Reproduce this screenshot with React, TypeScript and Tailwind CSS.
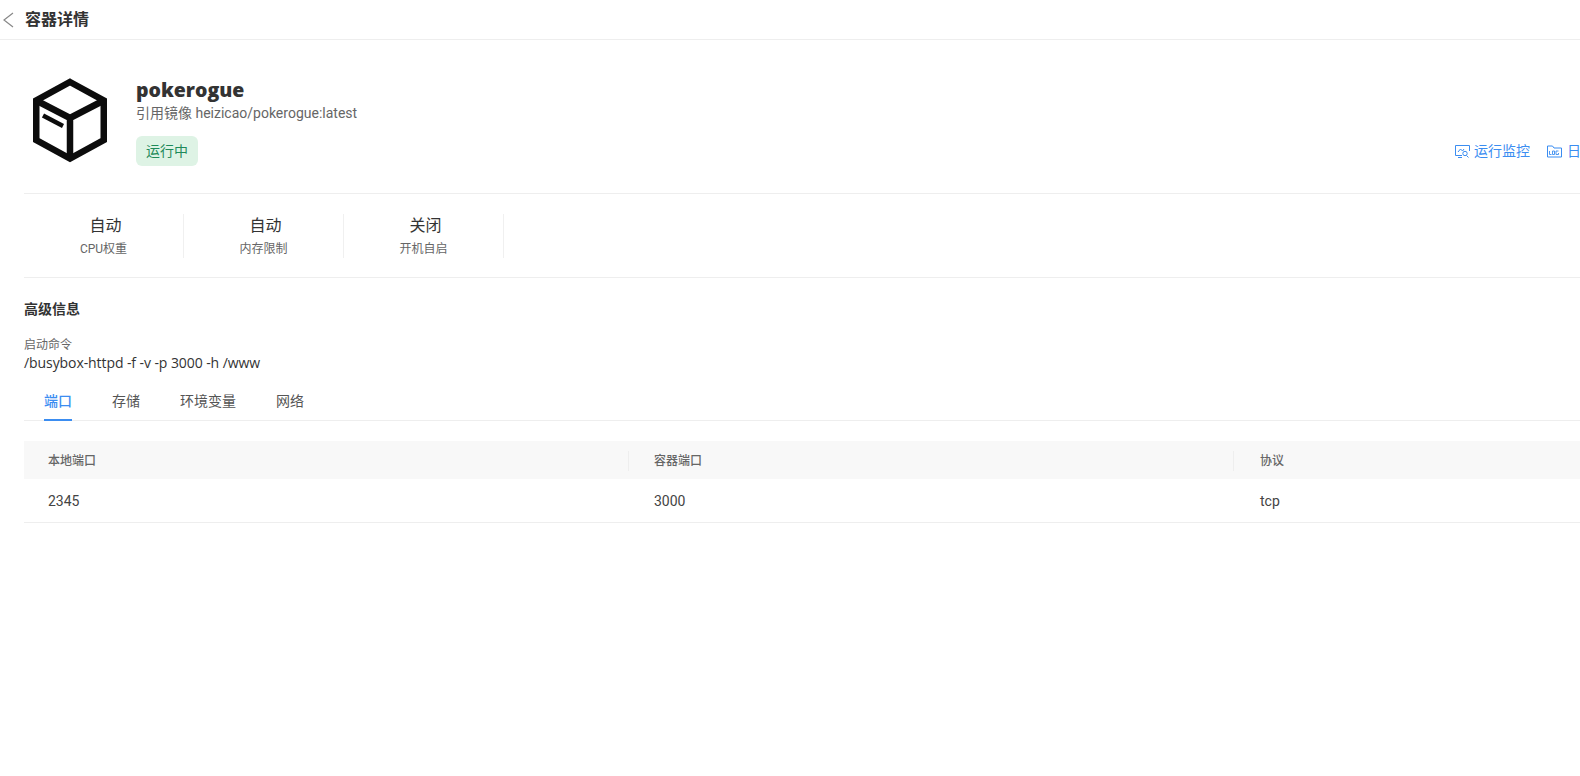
const font = "font-['Roboto','Noto_Sans_CJK_SC',sans-serif]";
const openSans = "font-['Open_Sans','Noto_Sans_CJK_SC',sans-serif]";

function BoxIcon() {
  return (
    <svg width="90" height="90" viewBox="24 75 90 90" fill="none" stroke="#0c0c0c" className="shrink-0">
      <path d="M70 82 L103.75 100.5 V140 L70 158.5 L36.25 140 V100.5 Z" strokeWidth="6.5" strokeLinejoin="miter" />
      <path d="M36.25 100.5 L70 118 L103.75 100.5 M70 118 V158.5" strokeWidth="6.5" />
      <path d="M43 115.5 L63 126" strokeWidth="4.5" />
    </svg>
  );
}

function MonitorIcon() {
  return (
    <svg width="15" height="15" viewBox="0 0 15 15" fill="none" stroke="#3b8df1" strokeWidth="1">
      <path d="M7 11.5 H0.5 V1.5 H14.5 V7" />
      <path d="M3 8 L5.5 5 L7.5 7 L9 5" />
      <circle cx="10" cy="9.5" r="2.2" />
      <path d="M11.5 11.5 L13.5 13.5 M3 13.5 H7" />
    </svg>
  );
}

function LogIcon() {
  return (
    <svg width="15" height="15" viewBox="0 0 15 15" fill="none" stroke="#3b8df1" strokeWidth="1">
      <path d="M0.5 13 V2 H5.5 L7 4 H14.5 V13 Z" />
      <path d="M2.5 7 V10.5 H4.5 M5.5 7 H7.5 V10.5 H5.5 Z M11.5 7 H9 V10.5 H11.5 V9" strokeWidth="0.9" />
    </svg>
  );
}

function Stat({ value, label }: { value: string; label: string }) {
  return (
    <div className="flex h-[44px] w-[160px] flex-col items-center border-r border-[#f0f0f0]">
      <div className="pl-[4px] text-[16px] leading-[24px] text-[#333]">{value}</div>
      <div className="mt-[3px] text-[12px] leading-[16px] text-[#666]">{label}</div>
    </div>
  );
}

export default function App() {
  const tabs = ["端口", "存储", "环境变量", "网络"];
  const cols = ["本地端口", "容器端口", "协议"];
  const vals = ["2345", "3000", "tcp"];
  const cellPad = ["pl-[24px]", "pl-[25px]", "pl-[26px]"];

  return (
    <div className={`h-screen w-screen overflow-hidden bg-white ${font}`}>
      <div className="w-[1863px]">
        <div className="flex h-[40px] items-center border-b border-[#eee]">
          <svg width="12" height="16" viewBox="0 0 12 16" fill="none" stroke="#888" strokeWidth="1.2" className="ml-[2px]">
            <path d="M11 1 L2 8 L11 15" />
          </svg>
          <span className="ml-[11px] text-[16px] font-bold text-[#333]">容器详情</span>
        </div>

        <div className="pl-[24px]">
          <div className="flex h-[154px] items-start border-b border-[#eee] pt-[35px]">
            <div className="flex w-[1571px] items-start">
              <BoxIcon />
              <div className="ml-[22px] flex-1 pt-[3px]">
                <div className={`text-[19.5px] leading-[24px] font-extrabold text-[#333] ${openSans}`}>pokerogue</div>
                <div className="text-[14px] leading-[22px] text-[#666]">引用镜像 heizicao/pokerogue:latest</div>
                <div className="mt-[12px] flex h-[30px] w-[62px] items-center justify-center rounded-[6px] bg-[#def3e5] text-[14px] text-[#1e8a5a]">运行中</div>
              </div>
              <div className="mt-[66px] flex h-[20px] items-center text-[14px] text-[#3b8df1]">
                <MonitorIcon />
                <span className="ml-[4px]">运行监控</span>
                <span className="ml-[17px]"><LogIcon /></span>
                <span className="ml-[5px]">日志</span>
              </div>
            </div>
          </div>

          <div className="flex h-[84px] items-center border-b border-[#eee]">
            <Stat value="自动" label="CPU权重" />
            <Stat value="自动" label="内存限制" />
            <Stat value="关闭" label="开机自启" />
          </div>

          <div className="mt-[21px] text-[14px] leading-[20px] font-bold text-[#333]">高级信息</div>
          <div className="mt-[18px] text-[12px] leading-[16px] text-[#666]">启动命令</div>
          <div className={`text-[14px] leading-[20px] tracking-[-0.08px] text-[#333] ${openSans}`}>/busybox-httpd -f -v -p 3000 -h /www</div>

          <div className="mt-[7px] flex h-[41px] gap-[40px] border-b border-[#eee] pl-[20px]">
            {tabs.map((t, i) => (
              <div
                key={t}
                className={
                  i === 0
                    ? "flex h-[41px] items-center border-b-2 border-[#3b8df1] pt-[4px] text-[14px] font-medium text-[#3b8df1]"
                    : "flex h-[41px] items-center pt-[2px] text-[14px] text-[#555]"
                }
              >
                {t}
              </div>
            ))}
          </div>

          <div className="mt-[20px] grid h-[38px] grid-cols-[605px_605px_605px] items-center bg-[#f8f8f8] pt-[1px] text-[12px] font-medium text-[#666]">
            {cols.map((c, i) => (
              <div key={c} className={`flex h-[20px] items-center border-r border-[#eee] ${cellPad[i]}`}>{c}</div>
            ))}
          </div>
          <div className="grid h-[44px] grid-cols-[605px_605px_605px] items-center border-b border-[#eee] pt-[1px] text-[14px] text-[#444]">
            {vals.map((v, i) => (
              <div key={v} className={cellPad[i]}>{v}</div>
            ))}
          </div>
        </div>
      </div>
    </div>
  );
}
